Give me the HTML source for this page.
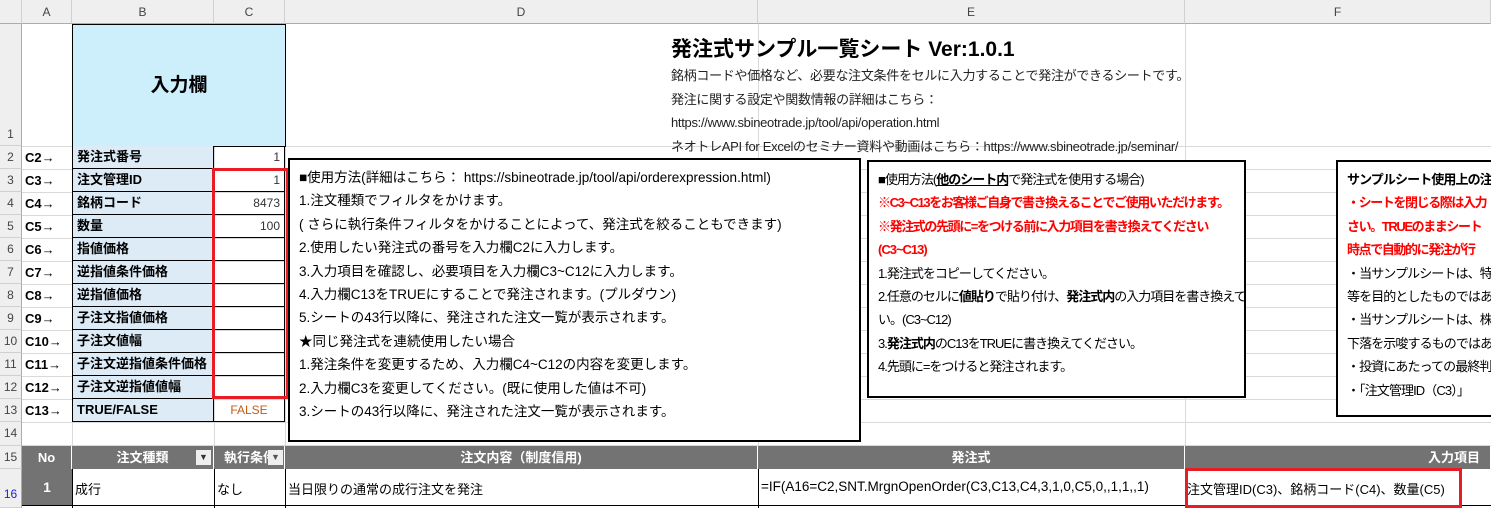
<!DOCTYPE html>
<html><head><meta charset="utf-8"><style>
*{margin:0;padding:0;box-sizing:border-box}
body{width:1491px;height:508px;overflow:hidden;background:#fff;position:relative;font-family:"Liberation Sans","Noto Sans CJK JP",sans-serif;font-size:13px;color:#000}
.a{position:absolute}
.hl{position:absolute;left:22px;width:1469px;height:1px;background:#d9d9d9}
.vl{position:absolute;top:24px;width:1px;height:484px;background:#d9d9d9}
.ch{position:absolute;top:0;height:24px;background:#efefef;border-right:1px solid #d0d0d0;border-bottom:1px solid #ababab;text-align:center;line-height:24px;font-size:12px;color:#444}
.rh{position:absolute;left:0;width:22px;background:#efefef;border-bottom:1px solid #d0d0d0;border-right:1px solid #ababab;text-align:center;font-size:12px;color:#444;line-height:22px}
.lbl{position:absolute;left:25px;font-weight:bold;font-size:13px;line-height:23px}
.b{position:absolute;left:72px;width:142px;height:23px;background:#ddebf7;border:1px solid #000;border-top:none;font-weight:bold;line-height:22px;padding-left:4px;font-size:13px}
.c{position:absolute;left:214px;width:71px;height:23px;border-right:1px solid #000;border-bottom:1px solid #000;text-align:right;padding-right:4px;line-height:22px;font-size:12px;color:#333}
.box{position:absolute;background:#fff;border:2px solid #000;padding:6px 9px;font-size:13px;line-height:23.4px;white-space:nowrap;overflow:hidden}
.r{color:#f00;font-weight:bold}
.th{position:absolute;top:446px;height:23px;background:#737373;color:#fff;font-weight:bold;text-align:center;line-height:23px;border-right:1px solid #fff}
</style></head><body>
<div class="hl" style="top:146px"></div><div class="hl" style="top:169px"></div><div class="hl" style="top:192px"></div><div class="hl" style="top:215px"></div><div class="hl" style="top:238px"></div><div class="hl" style="top:261px"></div><div class="hl" style="top:284px"></div><div class="hl" style="top:307px"></div><div class="hl" style="top:330px"></div><div class="hl" style="top:353px"></div><div class="hl" style="top:376px"></div><div class="hl" style="top:399px"></div><div class="hl" style="top:422px"></div><div class="hl" style="top:445px"></div>
<div class="vl" style="left:72px"></div><div class="vl" style="left:214px"></div><div class="vl" style="left:285px"></div><div class="vl" style="left:758px"></div><div class="vl" style="left:1185px"></div>
<div class="ch" style="left:0;width:22px"></div>
<div class="ch" style="left:22px;width:50px">A</div>
<div class="ch" style="left:72px;width:142px">B</div>
<div class="ch" style="left:214px;width:71px">C</div>
<div class="ch" style="left:285px;width:473px">D</div>
<div class="ch" style="left:758px;width:427px">E</div>
<div class="ch" style="left:1185px;width:306px">F</div>
<div class="rh" style="top:24px;height:122px;line-height:220px">1</div>
<div class="rh" style="top:146px;height:23px">2</div><div class="rh" style="top:169px;height:23px">3</div><div class="rh" style="top:192px;height:23px">4</div><div class="rh" style="top:215px;height:23px">5</div><div class="rh" style="top:238px;height:23px">6</div><div class="rh" style="top:261px;height:23px">7</div><div class="rh" style="top:284px;height:23px">8</div><div class="rh" style="top:307px;height:23px">9</div><div class="rh" style="top:330px;height:23px">10</div><div class="rh" style="top:353px;height:23px">11</div><div class="rh" style="top:376px;height:23px">12</div><div class="rh" style="top:399px;height:23px">13</div><div class="rh" style="top:422px;height:24px">14</div><div class="rh" style="top:446px;height:23px">15</div><div class="rh" style="top:469px;height:39px;line-height:50px;color:#22c">16</div>
<div class="a" style="left:72px;top:24px;width:214px;height:123px;background:#cdeefb;border:1px solid #000;text-align:center;line-height:122px;font-size:19px;font-weight:bold">入力欄</div>
<div class="lbl" style="top:146px">C2→</div><div class="lbl" style="top:169px">C3→</div><div class="lbl" style="top:192px">C4→</div><div class="lbl" style="top:215px">C5→</div><div class="lbl" style="top:238px">C6→</div><div class="lbl" style="top:261px">C7→</div><div class="lbl" style="top:284px">C8→</div><div class="lbl" style="top:307px">C9→</div><div class="lbl" style="top:330px">C10→</div><div class="lbl" style="top:353px">C11→</div><div class="lbl" style="top:376px">C12→</div><div class="lbl" style="top:399px">C13→</div>
<div class="b" style="top:146px">発注式番号</div><div class="b" style="top:169px">注文管理ID</div><div class="b" style="top:192px">銘柄コード</div><div class="b" style="top:215px">数量</div><div class="b" style="top:238px">指値価格</div><div class="b" style="top:261px">逆指値条件価格</div><div class="b" style="top:284px">逆指値価格</div><div class="b" style="top:307px">子注文指値価格</div><div class="b" style="top:330px">子注文値幅</div><div class="b" style="top:353px">子注文逆指値条件価格</div><div class="b" style="top:376px">子注文逆指値値幅</div><div class="b" style="top:399px">TRUE/FALSE</div>
<div class="c" style="top:146px">1</div><div class="c" style="top:169px">1</div><div class="c" style="top:192px">8473</div><div class="c" style="top:215px">100</div><div class="c" style="top:238px"></div><div class="c" style="top:261px"></div><div class="c" style="top:284px"></div><div class="c" style="top:307px"></div><div class="c" style="top:330px"></div><div class="c" style="top:353px"></div><div class="c" style="top:376px"></div><div class="c" style="top:399px;text-align:center;color:#c55a11;padding:0">FALSE</div>
<div class="a" style="left:212px;top:168px;width:77px;height:231px;border:3px solid #e81c24"></div>
<div class="a" style="left:671px;top:33px;font-size:21px;font-weight:bold;white-space:nowrap">発注式サンプル一覧シート Ver:1.0.1</div>
<div class="a" style="left:671px;top:64px;font-size:13px;line-height:23.7px;white-space:nowrap;color:#222;letter-spacing:-0.3px">銘柄コードや価格など、必要な注文条件をセルに入力することで発注ができるシートです。<br>発注に関する設定や関数情報の詳細はこちら：<br>https://www.sbineotrade.jp/tool/api/operation.html<br>ネオトレAPI for Excelのセミナー資料や動画はこちら：https://www.sbineotrade.jp/seminar/</div>
<div class="box" style="left:288px;top:158px;width:573px;height:284px;font-size:13.5px">■使用方法(詳細はこちら： https://sbineotrade.jp/tool/api/orderexpression.html)<br>1.注文種類でフィルタをかけます。<br>( さらに執行条件フィルタをかけることによって、発注式を絞ることもできます)<br>2.使用したい発注式の番号を入力欄C2に入力します。<br>3.入力項目を確認し、必要項目を入力欄C3~C12に入力します。<br>4.入力欄C13をTRUEにすることで発注されます。(プルダウン)<br>5.シートの43行以降に、発注された注文一覧が表示されます。<br>★同じ発注式を連続使用したい場合<br>1.発注条件を変更するため、入力欄C4~C12の内容を変更します。<br>2.入力欄C3を変更してください。(既に使用した値は不可)<br>3.シートの43行以降に、発注された注文一覧が表示されます。</div>
<div class="box" style="left:867px;top:160px;width:379px;height:238px;letter-spacing:-1px">■使用方法(<u><b>他のシート内</b></u>で発注式を使用する場合)<br><span class="r" style="letter-spacing:-1.4px">※C3~C13をお客様ご自身で書き換えることでご使用いただけます。</span><br><span class="r" style="letter-spacing:-1.4px">※発注式の先頭に=をつける前に入力項目を書き換えてください</span><br><span class="r">(C3~C13)</span><br>1.発注式をコピーしてください。<br>2.任意のセルに<b>値貼り</b>で貼り付け、<b>発注式内</b>の入力項目を書き換えてくださ<br>い。(C3~C12)<br>3.<b>発注式内</b>のC13をTRUEに書き換えてください。<br>4.先頭に=をつけると発注されます。</div>
<div class="box" style="left:1336px;top:160px;width:170px;height:257px;border-right:none;letter-spacing:-0.9px"><b>サンプルシート使用上の注意</b><br><span class="r" style="letter-spacing:-1.4px">・シートを閉じる際は入力</span><br><span class="r" style="letter-spacing:-1.4px">さい。TRUEのままシート</span><br><span class="r" style="letter-spacing:-1.4px">時点で自動的に発注が行</span><br>・当サンプルシートは、特定<br>等を目的としたものではあ<br>・当サンプルシートは、株式<br>下落を示唆するものではあ<br>・投資にあたっての最終判<br>・「注文管理ID（C3）」</div>
<div class="th" style="left:22px;width:50px">No</div>
<div class="th" style="left:72px;width:142px">注文種類<span style="position:absolute;right:2px;top:4px;width:15px;height:15px;background:#eee;color:#333;font-size:9px;line-height:15px">▼</span></div>
<div class="th" style="left:214px;width:71px;text-align:left;padding-left:10px;overflow:hidden">執行条件<span style="position:absolute;right:1px;top:4px;width:15px;height:15px;background:#eee;color:#555;font-size:9px;line-height:15px;text-align:center">▼</span></div>
<div class="th" style="left:285px;width:473px">注文内容（制度信用)</div>
<div class="th" style="left:758px;width:427px">発注式</div>
<div class="th" style="left:1185px;width:306px;text-align:right;padding-right:10px">入力項目</div>
<div class="a" style="left:22px;top:469px;width:50px;height:36px;background:#737373;color:#fff;font-weight:bold;text-align:center;line-height:36px;font-size:14px">1</div>
<div class="a" style="left:22px;top:505px;width:1469px;height:1px;background:#000"></div>
<div class="a" style="left:72px;top:469px;width:1px;height:39px;background:#000"></div><div class="a" style="left:214px;top:469px;width:1px;height:39px;background:#000"></div><div class="a" style="left:285px;top:469px;width:1px;height:39px;background:#000"></div><div class="a" style="left:758px;top:469px;width:1px;height:39px;background:#000"></div>
<div class="a" style="left:75px;top:479px">成行</div>
<div class="a" style="left:217px;top:479px">なし</div>
<div class="a" style="left:288px;top:479px">当日限りの通常の成行注文を発注</div>
<div class="a" style="left:761px;top:479px;white-space:nowrap;font-size:13.5px">=IF(A16=C2,SNT.MrgnOpenOrder(C3,C13,C4,3,1,0,C5,0,,1,1,,1)</div>
<div class="a" style="left:1187px;top:479px;white-space:nowrap;font-size:13px">注文管理ID(C3)、銘柄コード(C4)、数量(C5)</div>
<div class="a" style="left:1185px;top:468px;width:277px;height:40px;border:3px solid #e81c24"></div>
</body></html>
